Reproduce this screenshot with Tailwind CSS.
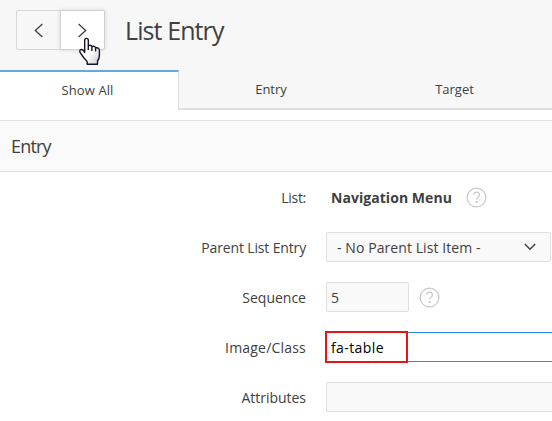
<!DOCTYPE html>
<html lang="en">
<head>
<meta charset="utf-8">
<title>List Entry</title>
<script src="https://cdn.jsdelivr.net/npm/@tailwindcss/browser@4"></script>
</head>
<body class="w-[552px] h-[421px] overflow-hidden bg-white text-[#404040] font-['Open_Sans','Noto_Sans',sans-serif] text-sm leading-5 whitespace-nowrap">
<header class="relative h-[70px] bg-[#f7f7f7] pt-[10px] pl-4 flex items-start">
  <div class="flex h-10 w-[89px]">
    <button class="w-[45px] h-10 rounded-l-xs border border-[#d8d8d8] flex items-center justify-center" aria-label="Previous">
      <svg class="w-[9px] h-[15px]" viewBox="0 0 9 15" fill="none" stroke="#404040" stroke-width="1.3"><path d="M8.4 .9 1.3 7.5 8.4 14.1"/></svg>
    </button>
    <button class="-ml-px w-[45px] h-10 rounded-r-xs border border-[#d0d0d0] bg-white shadow-[0_0_4px_rgba(0,0,0,0.14)] flex items-center justify-center pr-px" aria-label="Next">
      <svg class="w-[9px] h-[15px]" viewBox="0 0 9 15" fill="none" stroke="#404040" stroke-width="1.3"><path d="M.6 .9 7.7 7.5 .6 14.1"/></svg>
    </button>
  </div>
  <h1 class="ml-5 text-[25px] leading-[41px] tracking-[-0.9px]">List Entry</h1>
  <svg class="absolute left-[79px] top-[37px] w-[22px] h-[29px]" viewBox="0 0 22 29" stroke="#15152a" stroke-width="1.4" stroke-linejoin="round"><defs><linearGradient id="hand" x1="0" y1="0" x2="1" y2="1"><stop offset=".55" stop-color="#fff"/><stop offset="1" stop-color="#c8c8d0"/></linearGradient></defs><path fill="url(#hand)" d="M5.7 15.5V3.2Q5.7 1.4 7.5 1.4T9.3 3.2V8.6Q12.2 7.6 12.9 9.6 15.8 8.4 16.6 10.8 19.9 10.2 20.4 13V18.5q0 3-1.9 5.5v3.2H8.2v-2.6L4.6 20.5.9 15.2q-.5-2.9 2-2.7Q4.3 12.7 5.7 15.5z"/><path fill="none" d="M9.3 8.6V13M12.9 9.6V14M16.6 10.8V14.5"/></svg>
</header>
<nav class="flex h-10 text-center leading-[39px] text-[13px]">
  <a class="w-[179px] border-t-2 border-t-[#64a5e3] border-r border-r-[#dfdfdf] pr-[3px] leading-[37px] tracking-[0.1px]">Show All</a>
  <a class="w-[183px] bg-[#f7f7f7] border-b-2 border-[#dfdfdf] pl-px">Entry</a>
  <a class="w-[190px] bg-[#f7f7f7] border-b-2 border-[#dfdfdf] pr-[5px]">Target</a>
</nav>
<main class="pt-2.5">
  <h2 class="h-[52px] border-y border-[#dfdfdf] bg-[#fafafa] pl-[11px] text-[18px] leading-[51px] tracking-[-0.8px]">Entry</h2>
  <div class="pt-[10px] flex flex-col gap-5">
    <div class="h-[30px] flex items-center"><label class="w-[306px] shrink-0 pt-0.5 text-right mr-[25px] tracking-[-0.3px]">List:</label><b class="w-[121px] pt-0.5 tracking-[0.05px]">Navigation Menu</b>
      <svg class="ml-[14px] w-[21px] h-[21px]" viewBox="0 0 21 21" fill="none" stroke="#c9c9c9" stroke-width="1.3"><circle cx="10.5" cy="10.5" r="9.4"/><path d="M7.8 8q0-2.8 2.8-2.8T13.4 8q0 1.3-1.5 2.2-1.3.8-1.3 2.3"/><path d="M10.6 14v2" stroke-width="1.8"/></svg>
    </div>
    <div class="h-[30px] flex items-center"><label class="w-[306px] shrink-0 pt-0.5 text-right mr-5 tracking-[-0.15px]">Parent List Entry</label>
      <div class="w-[225px] h-[30px] rounded-xs border border-[#dfdfdf] bg-[#f9f9f9] flex items-center justify-between pl-2.5 pr-[14px]"><span class="pt-0.5 tracking-[0.08px]">- No Parent List Item -</span>
        <svg class="w-3 h-2" viewBox="0 0 12 8" fill="none" stroke="#404040" stroke-width="1.5"><path d="m.8 1 5.2 5.2L11.2 1"/></svg></div>
    </div>
    <div class="h-[30px] flex items-center"><label class="w-[306px] shrink-0 pt-0.5 text-right mr-5">Sequence</label>
      <div class="w-[83px] h-[30px] rounded-xs border border-[#dfdfdf] bg-[#f9f9f9] pl-1 leading-[30px]">5</div>
      <svg class="ml-[9.5px] w-[21px] h-[21px]" viewBox="0 0 21 21" fill="none" stroke="#c9c9c9" stroke-width="1.3"><circle cx="10.5" cy="10.5" r="9.4"/><path d="M7.8 8q0-2.8 2.8-2.8T13.4 8q0 1.3-1.5 2.2-1.3.8-1.3 2.3"/><path d="M10.6 14v2" stroke-width="1.8"/></svg>
    </div>
    <div class="h-[30px] flex items-center"><label class="w-[306px] shrink-0 pt-0.5 text-right mr-5 tracking-[0.2px]">Image/Class</label>
      <div class="relative w-[240px] shrink-0 h-[30px] border border-[#2e8bdf] bg-white pl-1 leading-[30px] text-black tracking-[0.4px]">fa-table<span class="absolute -left-[2px] -top-[2px] w-[83px] h-8 border-2 border-[#e41419]"></span></div>
    </div>
    <div class="h-[30px] flex items-center"><label class="w-[306px] shrink-0 pt-0.5 text-right mr-5 tracking-[-0.02px]">Attributes</label>
      <div class="w-[240px] shrink-0 h-[30px] rounded-xs border border-[#dfdfdf] bg-[#f9f9f9]"></div>
    </div>
  </div>
</main>
</body>
</html>
